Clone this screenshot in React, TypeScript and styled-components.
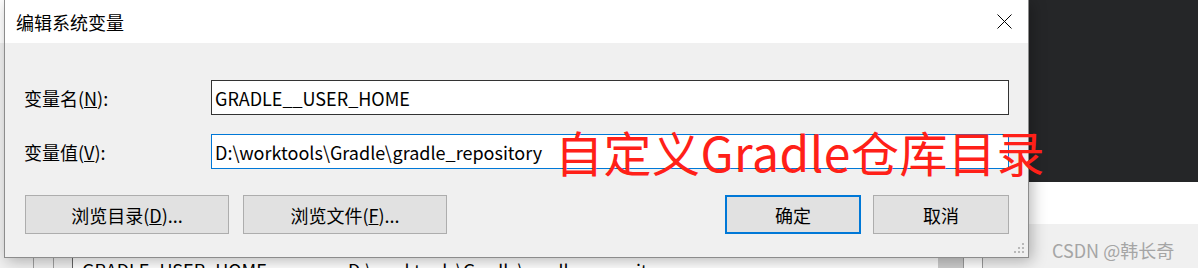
import React from 'react';
import styled, { createGlobalStyle } from 'styled-components';

const uiFont = `"Noto Sans CJK SC", "Microsoft YaHei", sans-serif`;

const GlobalStyle = createGlobalStyle`
  html, body {
    margin: 0;
    padding: 0;
  }
  body {
    width: 1198px;
    height: 268px;
    overflow: hidden;
    background: #f0f0f0;
  }
`;

const Page = styled.div`
  position: relative;
  display: grid;
  width: 1198px;
  height: 268px;
  overflow: hidden;
  font-family: ${uiFont};
  color: #000;
`;

/* ---- window behind the dialog ---- */

const Backdrop = styled.div`
  grid-area: 1 / 1;
  display: flex;
`;

const BackWindow = styled.div`
  width: 1028px;
  display: flex;
  flex-direction: column;
`;

const BackHeader = styled.div`
  height: 43px;
  background: #fff;
`;

const BackBody = styled.div`
  flex: 1;
  background: #f0f0f0;
`;

const BackRow = styled.div`
  display: flex;
  height: 11px;
  overflow: hidden;
`;

const GutterCell = styled.div<{ $w: number; $line: string; $bg?: string }>`
  width: ${p => p.$w}px;
  flex-shrink: 0;
  box-sizing: border-box;
  border-right: 1px solid ${p => p.$line};
  background: ${p => p.$bg || '#f0f0f0'};
`;

const ListCell = styled.div`
  width: 865px;
  flex-shrink: 0;
  display: flex;
  background: #fff;
  font-size: 18px;
  line-height: 26px;
  white-space: nowrap;
`;

const ListText = styled.span<{ $w?: number }>`
  display: block;
  width: ${p => (p.$w ? `${p.$w}px` : 'auto')};
  padding-left: ${p => (p.$w ? '9px' : '0')};
`;

const SidePanel = styled.div`
  flex: 1;
  display: flex;
  flex-direction: column;
`;

const DarkBand = styled.div`
  height: 182px;
  background: #252628;
`;

const LightBand = styled.div`
  height: 42px;
  background: #fff;
`;

const Watermark = styled.div`
  flex: 1;
  background: #f0f0f0;
  padding: 14px 0 0 24px;
  font-size: 18px;
  line-height: 24px;
  color: #a5a5a5;
  white-space: nowrap;
`;

/* ---- dialog ---- */

const Dialog = styled.div`
  grid-area: 1 / 1;
  align-self: start;
  justify-self: start;
  position: relative;
  margin-left: 4px;
  width: 1025px;
  height: 258px;
  box-sizing: border-box;
  border: 1px solid #8c8c8c;
  border-top: none;
  background: #f0f0f0;
  box-shadow: 3px 3px 14px rgba(0, 0, 0, 0.28);
  display: flex;
  flex-direction: column;
`;

const TitleBar = styled.div`
  height: 43px;
  flex-shrink: 0;
  display: flex;
  align-items: center;
  justify-content: space-between;
  padding: 0 16px 0 11px;
  background: #fff;
`;

const Title = styled.span`
  font-size: 18px;
  line-height: 24px;
`;

const CloseButton = styled.div`
  width: 15px;
  height: 15px;
  display: flex;
  margin-top: -1px;
`;

const Body = styled.div`
  flex: 1;
  padding: 37px 18px 0 19px;
`;

const FieldGrid = styled.div`
  display: grid;
  grid-template-columns: 187px 798px;
  grid-auto-rows: 35px;
  row-gap: 19px;
  align-items: center;
`;

const Label = styled.label`
  font-size: 18px;
  line-height: 24px;
`;

const Field = styled.input<{ $focused?: boolean }>`
  box-sizing: border-box;
  width: 100%;
  height: 35px;
  margin: 0;
  padding: 0 0 0 3px;
  border: 1px solid ${p => (p.$focused ? '#0078d7' : '#333')};
  background: #fff;
  font-family: ${uiFont};
  font-size: 18px;
  color: #000;
  outline: none;
`;

const ButtonRow = styled.div`
  display: flex;
  align-items: center;
  margin-top: 26px;
  padding: 0 1px;
`;

const Spacer = styled.div`
  flex: 1;
`;

const Button = styled.button<{ $w: number; $primary?: boolean; $gap?: number }>`
  box-sizing: border-box;
  width: ${p => p.$w}px;
  height: 39px;
  margin: 0 0 0 ${p => p.$gap || 0}px;
  padding: 0;
  border: ${p => (p.$primary ? '2px solid #0078d7' : '1px solid #adadad')};
  background: #e1e1e1;
  font-family: ${uiFont};
  font-size: 18px;
  color: #000;
`;

const Grip = styled.div`
  position: absolute;
  right: 3px;
  bottom: 3px;
  width: 12px;
  height: 12px;
  display: flex;
`;

const Annotation = styled.div`
  position: absolute;
  left: 555px;
  top: 127px;
  font-family: ${uiFont};
  font-size: 48px;
  line-height: 48px;
  letter-spacing: 0.5px;
  color: #ff2018;
  white-space: nowrap;
`;

const GripDots = () => (
  <svg width="12" height="12" viewBox="0 0 12 12">
    {[
      [9, 1],
      [5, 5],
      [9, 5],
      [1, 9],
      [5, 9],
      [9, 9],
    ].map(([x, y]) => (
      <rect key={`${x}-${y}`} x={x} y={y} width="2" height="2" fill="#b9b9b9" />
    ))}
  </svg>
);

export default function App() {
  return (
    <>
      <GlobalStyle />
      <Page>
        <Backdrop>
          <BackWindow>
            <BackHeader />
            <BackBody />
            <BackRow>
              <GutterCell $w={34} $line="#a0a0a0" />
              <GutterCell $w={20} $line="#a0a0a0" />
              <GutterCell $w={19} $line="#646464" />
              <ListCell>
                <ListText $w={266}>GRADLE_USER_HOME</ListText>
                <ListText>D:\worktools\Gradle\gradle_repository</ListText>
              </ListCell>
              <GutterCell $w={26} $line="#9a9a9a" $bg="#cdcdcd" />
              <GutterCell $w={19} $line="#9a9a9a" $bg="#fff" />
              <GutterCell $w={45} $line="#f0f0f0" />
            </BackRow>
          </BackWindow>
          <SidePanel>
            <DarkBand />
            <LightBand />
            <Watermark>CSDN @韩长奇</Watermark>
          </SidePanel>
        </Backdrop>

        <Dialog>
          <TitleBar>
            <Title>编辑系统变量</Title>
            <CloseButton>
              <svg width="15" height="15" viewBox="0 0 15 15">
                <path d="M0.5 0.5 L14.5 14.5 M14.5 0.5 L0.5 14.5" stroke="#000" strokeWidth="1" />
              </svg>
            </CloseButton>
          </TitleBar>
          <Body>
            <FieldGrid>
              <Label>
                变量名(<u>N</u>):
              </Label>
              <Field readOnly value="GRADLE__USER_HOME" />
              <Label>
                变量值(<u>V</u>):
              </Label>
              <Field readOnly $focused value="D:\worktools\Gradle\gradle_repository" />
            </FieldGrid>
            <ButtonRow>
              <Button $w={204}>
                浏览目录(<u>D</u>)...
              </Button>
              <Button $w={204} $gap={14}>
                浏览文件(<u>F</u>)...
              </Button>
              <Spacer />
              <Button $w={136} $primary>
                确定
              </Button>
              <Button $w={136} $gap={12}>
                取消
              </Button>
            </ButtonRow>
          </Body>
          <Grip>
            <GripDots />
          </Grip>
        </Dialog>

        <Annotation>自定义Gradle仓库目录</Annotation>
      </Page>
    </>
  );
}
